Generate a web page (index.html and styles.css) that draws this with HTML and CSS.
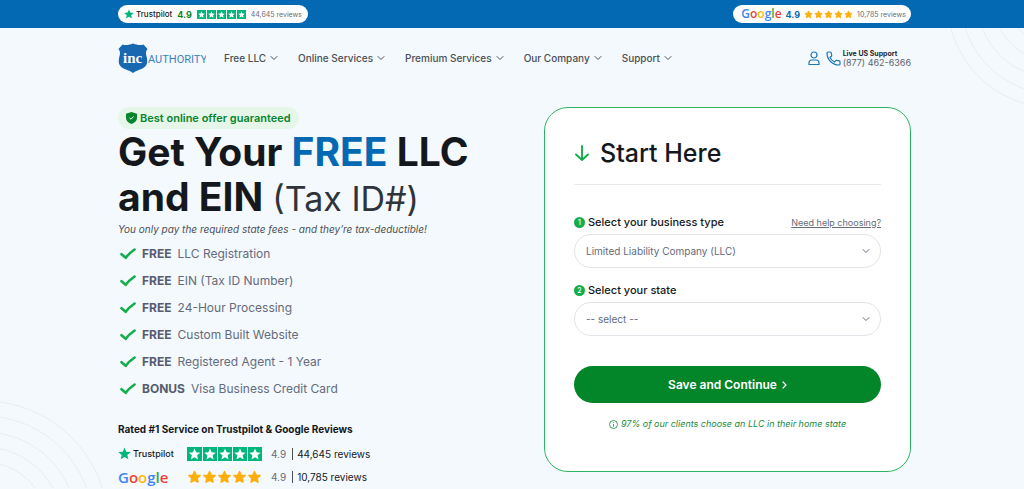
FILE: index.html
```
<!DOCTYPE html>
<html lang="en">
<head>
<meta charset="utf-8">
<title>Inc Authority - Free LLC</title>
<link rel="stylesheet" href="styles.css">
</head>
<body>
<svg class="defs" aria-hidden="true">
  <symbol id="star" viewBox="0 0 24 24"><path d="M12 1l3.2 7.6 8.3.7-6.3 5.4 1.9 8.1L12 18.5l-7.1 4.3 1.9-8.1L.5 9.3l8.3-.7z"/></symbol>
  <symbol id="round-star" viewBox="0 0 24 24"><path d="M12 2.500l2.900 6.200 6.800.8-5 4.700 1.300 6.800-6-3.400L6 21l1.300-6.800-5-4.700 6.800-.8z" stroke="#ffae0a" stroke-width="2.400" stroke-linejoin="round"/></symbol>
  <symbol id="chevron" viewBox="0 0 8 8"><path d="M1 2.500l3 3 3-3" fill="none" stroke="currentColor" stroke-width="1" stroke-linecap="round" stroke-linejoin="round"/></symbol>
  <symbol id="check" viewBox="0 0 16 12"><path d="M1.500 6.200L5.700 9.800C8 6.500 11 4 14.600 1.500" fill="none" stroke="#14ad4b" stroke-width="2.600" stroke-linecap="round" stroke-linejoin="round"/></symbol>
</svg>
<svg class="arcs arcs-right" viewBox="0 0 84 84" aria-hidden="true"><circle cx="115" cy="-28" r="108"/><circle cx="115" cy="-28" r="94"/><circle cx="115" cy="-28" r="78"/><circle cx="115" cy="-28" r="62"/><circle cx="115" cy="-28" r="46"/></svg>
<svg class="arcs arcs-left" viewBox="0 0 110 90" aria-hidden="true"><circle cx="-16" cy="126" r="124"/><circle cx="-16" cy="126" r="109"/><circle cx="-16" cy="126" r="93"/><circle cx="-16" cy="126" r="78"/><circle cx="-16" cy="126" r="63"/></svg>

<div class="topbar">
  <div class="wrap topbar-row">
    <a class="pill" href="#">
      <span class="tp-logo"><svg class="tp-star"><use href="#star"/></svg>Trustpilot</span>
      <strong class="score green">4.9</strong>
      <span class="boxes"><svg><use href="#star"/></svg><svg><use href="#star"/></svg><svg><use href="#star"/></svg><svg><use href="#star"/></svg><svg><use href="#star"/></svg></span>
      <span>44,645 reviews</span>
    </a>
    <a class="pill pill-google" href="#">
      <span class="google"><i class="b">G</i><i class="r">o</i><i class="y">o</i><i class="b">g</i><i class="g">l</i><i class="r">e</i></span>
      <strong class="score blue">4.9</strong>
      <span class="stars"><svg><use href="#round-star"/></svg><svg><use href="#round-star"/></svg><svg><use href="#round-star"/></svg><svg><use href="#round-star"/></svg><svg><use href="#round-star"/></svg></span>
      <span>10,785 reviews</span>
    </a>
  </div>
</div>

<header class="wrap header">
  <a class="logo" href="#" aria-label="Inc Authority">
    <svg width="88" height="31" viewBox="0 0 88 31">
      <path d="M4.500 1.500C8 2.500 11 2 15 .5c4 1.500 7 2 10.500 1L29.500 6c-2 2.500-1.800 4.500-.8 8 1.300 5.500.3 9-4.200 11.500-3.500 1.700-6.500 2-9.500 4.500-3-2.500-6-2.800-9.500-4.500C1 23 0 19.500 1.300 14c1-3.500 1.200-5.500-.8-8z" fill="#1767b1"/>
      <text x="5" y="20" class="logo-inc">inc</text>
      <text x="30" y="20" class="logo-word">AUTHORITY</text>
    </svg>
  </a>
  <nav class="nav">
    <a href="#">Free LLC <svg><use href="#chevron"/></svg></a>
    <a href="#">Online Services <svg><use href="#chevron"/></svg></a>
    <a href="#">Premium Services <svg><use href="#chevron"/></svg></a>
    <a href="#">Our Company <svg><use href="#chevron"/></svg></a>
    <a href="#">Support <svg><use href="#chevron"/></svg></a>
  </nav>
  <div class="contact">
    <a href="#" aria-label="Account"><svg width="12" height="15" viewBox="0 0 12 15"><circle cx="6" cy="4" r="3"/><path d="M1 13.500v-1.500a3 3 0 0 1 3-3h4a3 3 0 0 1 3 3v1.500z"/></svg></a>
    <a class="phone" href="tel:8774626366">
      <svg width="15" height="15" viewBox="0 0 15 15"><path d="M2 1h2.200c.5 0 .8.300.9.700l.6 2.600c.1.400 0 .7-.3 1L4 6.500A11 11 0 0 0 8.500 11l1.200-1.400c.3-.3.600-.4 1-.3l2.600.6c.4.100.7.500.7.900V13c0 .6-.4 1-1 1C6.400 14 1 8.600 1 2c0-.6.4-1 1-1z"/></svg>
      <span><strong>Live US Support</strong>(877) 462-6366</span>
    </a>
  </div>
</header>

<main class="wrap hero">
  <section class="offer">
    <p class="badge"><svg width="11" height="12" viewBox="0 0 11 12"><path d="M5.500 0L11 1.800V6c0 3-2.500 5-5.500 6C2.500 11 0 9 0 6V1.800z" fill="#07852e"/><path d="M3.500 5.800l1.500 1.400 2.600-2.700" fill="none" stroke="#e6f7ea"/></svg>Best online offer guaranteed</p>
    <h1>Get Your <span class="free">FREE</span> LLC<br>and EIN <span class="tax">(Tax ID#)</span></h1>
    <p class="sub">You only pay the required state fees - and they’re tax-deductible!</p>
    <ul class="perks">
      <li><svg><use href="#check"/></svg><strong>FREE</strong>LLC Registration</li>
      <li><svg><use href="#check"/></svg><strong>FREE</strong>EIN (Tax ID Number)</li>
      <li><svg><use href="#check"/></svg><strong>FREE</strong>24-Hour Processing</li>
      <li><svg><use href="#check"/></svg><strong>FREE</strong>Custom Built Website</li>
      <li><svg><use href="#check"/></svg><strong>FREE</strong>Registered Agent - 1 Year</li>
      <li><svg><use href="#check"/></svg><strong>BONUS</strong>Visa Business Credit Card</li>
    </ul>
    <h2 class="rated">Rated #1 Service on Trustpilot &amp; Google Reviews</h2>
    <div class="rating">
      <span class="brand tp-logo"><svg class="tp-star"><use href="#star"/></svg>Trustpilot</span>
      <span class="boxes"><svg><use href="#star"/></svg><svg><use href="#star"/></svg><svg><use href="#star"/></svg><svg><use href="#star"/></svg><svg><use href="#star"/></svg></span>
      <span class="value">4.9</span><span class="count">44,645 reviews</span>
    </div>
    <div class="rating">
      <span class="brand google"><i class="b">G</i><i class="r">o</i><i class="y">o</i><i class="b">g</i><i class="g">l</i><i class="r">e</i></span>
      <span class="stars"><svg><use href="#round-star"/></svg><svg><use href="#round-star"/></svg><svg><use href="#round-star"/></svg><svg><use href="#round-star"/></svg><svg><use href="#round-star"/></svg></span>
      <span class="value">4.9</span><span class="count">10,785 reviews</span>
    </div>
  </section>

  <form class="card">
    <h2 class="start"><svg width="16" height="18" viewBox="0 0 16 18"><path d="M8 2v14M2 10.500l6 5.500 6-5.500" fill="none" stroke="#14ad4b" stroke-width="1.900" stroke-linecap="round" stroke-linejoin="round"/></svg>Start Here</h2>
    <div class="field">
      <div class="field-head"><label for="type"><span class="num">1</span>Select your business type</label><a href="#">Need help choosing?</a></div>
      <div class="select"><select id="type"><option>Limited Liability Company (LLC)</option></select><svg><use href="#chevron"/></svg></div>
    </div>
    <div class="field">
      <div class="field-head"><label for="state"><span class="num">2</span>Select your state</label></div>
      <div class="select"><select id="state"><option>-- select --</option></select><svg><use href="#chevron"/></svg></div>
    </div>
    <button type="button">Save and Continue<svg width="5" height="8" viewBox="0 0 5 8"><path d="M1 1l3 3-3 3" fill="none" stroke="#fff" stroke-width="1.200" stroke-linecap="round"/></svg></button>
    <p class="note"><svg width="9" height="9" viewBox="0 0 9 9"><circle cx="4.500" cy="4.500" r="4" fill="none" stroke="#188a3e" stroke-width=".8"/><path d="M4.500 4v2.600M4.500 2.300v.8" stroke="#188a3e" stroke-width=".8"/></svg>97% of our clients choose an LLC in their home state</p>
  </form>
</main>
</body>
</html>
```
FILE: styles.css
```
* { box-sizing: border-box; margin: 0; }
body {
  position: relative;
  background: #f4f9fd;
  color: #14181c;
  font-family: Inter, "Liberation Sans", sans-serif;
  font-size: 10px;
  overflow: hidden;
}
a { color: inherit; text-decoration: none; }
svg { display: block; flex: none; }
.defs { position: absolute; width: 0; height: 0; }
.arcs { position: absolute; z-index: -1; fill: none; stroke: #e4f0f0; }
.arcs-right { top: 28px; right: 0; width: 84px; height: 84px; }
.arcs-left { top: 399px; left: 0; width: 110px; height: 90px; }
.wrap { padding: 0 113px 0 118px; }

.topbar { background: #0369b3; }
.topbar-row { display: flex; justify-content: space-between; align-items: center; height: 28px; }
.pill {
  display: flex;
  align-items: center;
  gap: 5px;
  height: 18px;
  padding: 0 6px;
  border-radius: 9px;
  background: #fff;
  color: #666c74;
  font-size: 7px;
}
.pill-google { gap: 4px; padding: 0 5px 0 8px; }
.score { font-size: 9px; }
.green { color: #07852e; }
.blue { color: #0369b3; }
.tp-logo { display: flex; align-items: center; gap: 2px; color: #191919; font-size: 8px; font-weight: 500; }
.tp-star { width: 10px; height: 10px; fill: #00b67a; }
.boxes, .stars { display: flex; gap: 1px; }
.boxes svg { width: 9px; height: 9px; padding: 1px; background: #00b67a; fill: #fff; }
.stars svg { width: 9px; height: 9px; fill: #ffae0a; }
.google { font-family: "Open Sans", sans-serif; font-size: 12px; font-weight: 600; line-height: 16px; }
.google i { font-style: normal; }
.b { color: #4285f4; }
.r { color: #ea4335; }
.y { color: #fbbc05; }
.g { color: #34a853; }

.header { display: flex; align-items: center; height: 60px; }
.logo-inc { fill: #fff; font: bold 15px "Liberation Serif", serif; }
.logo-word { fill: #3f80bf; font: 11px Roboto, sans-serif; }
.nav { display: flex; gap: 20px; margin-left: 18px; color: #4b5055; font-weight: 500; }
.nav a { display: flex; align-items: center; gap: 4px; }
.nav svg { width: 8px; height: 8px; }
.contact { display: flex; align-items: center; gap: 6px; margin-left: auto; color: #5c636b; font-size: 9px; line-height: 10px; }
.contact svg { fill: none; stroke: #1f75ba; stroke-width: 1.2; }
.phone { display: flex; align-items: center; gap: 2px; }
.phone strong { display: block; color: #24282c; font-size: 7px; line-height: 9px; }

.hero { display: flex; justify-content: space-between; align-items: flex-start; padding-top: 19px; }
.badge {
  display: inline-flex;
  align-items: center;
  gap: 3px;
  height: 22px;
  padding: 0 8px;
  border-radius: 11px;
  background: #e6f7ea;
  color: #07852e;
  font-size: 11px;
  font-weight: 600;
}
h1 { font-size: 39px; font-weight: 700; line-height: 45px; }
.free { color: #0369b3; }
.tax { color: #2f343a; font-size: 34px; font-weight: 400; }
.sub { color: #4b5055; font-size: 10px; font-style: italic; line-height: 16px; }
.perks { padding: 3px 0 0 2px; list-style: none; color: #646b7b; font-size: 12px; }
.perks li { display: flex; align-items: center; gap: 6px; height: 27px; }
.perks svg { width: 16px; height: 12px; }
.perks strong { color: #565c70; font-weight: 700; }
.rated { margin: 20px 0 6px; font-size: 10px; font-weight: 700; line-height: 14px; }
.rating { display: flex; align-items: center; height: 23px; font-size: 10px; }
.rating .brand { width: 69px; }
.rating .tp-logo { font-size: 9px; }
.rating .tp-star { width: 13px; height: 13px; }
.rating .google { font-size: 15px; }
.rating .boxes svg { width: 15px; height: 14px; }
.rating .boxes, .rating .stars { gap: 0; }
.rating .boxes svg + svg { border-left: 1px solid #f4f9fd; }
.rating .stars svg { width: 15px; height: 14px; }
.value { margin: 0 6px 0 9px; color: #646b7b; }
.count { padding-left: 4px; border-left: 1px solid #4b5055; }

.card {
  width: 367px;
  padding: 28px 29px 40px;
  border: 1px solid #2db561;
  border-radius: 24px;
  background: #fff;
}
.start { display: flex; align-items: center; gap: 10px; height: 49px; padding-bottom: 14px; border-bottom: 1px solid #e8ebed; font-size: 25px; font-weight: 500; }
.field { margin-bottom: 13px; }
.start + .field { margin-top: 28px; }
.field-head { display: flex; justify-content: space-between; align-items: center; height: 21px; padding-bottom: 3px; }
.field-head label { display: flex; align-items: center; gap: 3px; font-size: 11px; font-weight: 500; }
.field-head a { color: #666c74; font-size: 9px; text-decoration: underline; }
.num { display: grid; place-items: center; width: 11px; height: 11px; border-radius: 50%; background: #14ad4b; color: #fff; font-size: 7px; }
.select { display: grid; align-items: center; }
.select > * { grid-area: 1 / 1; }
.select select {
  appearance: none;
  width: 100%;
  height: 34px;
  padding: 0 11px;
  border: 1px solid #e1e4e8;
  border-radius: 17px;
  background: #fff;
  color: #646b7b;
  font: 10px Inter, sans-serif;
}
.select svg { justify-self: end; width: 8px; height: 8px; margin-right: 11px; color: #646b7b; pointer-events: none; }
button {
  display: flex;
  justify-content: center;
  align-items: center;
  gap: 5px;
  width: 100%;
  height: 37px;
  margin-top: 30px;
  border: 0;
  border-radius: 19px;
  background: #03852a;
  color: #fff;
  font: 600 12px Inter, sans-serif;
}
.note { display: flex; justify-content: center; align-items: center; gap: 3px; margin-top: 14px; color: #188a3e; font-size: 9px; font-style: italic; line-height: 14px; }
```
